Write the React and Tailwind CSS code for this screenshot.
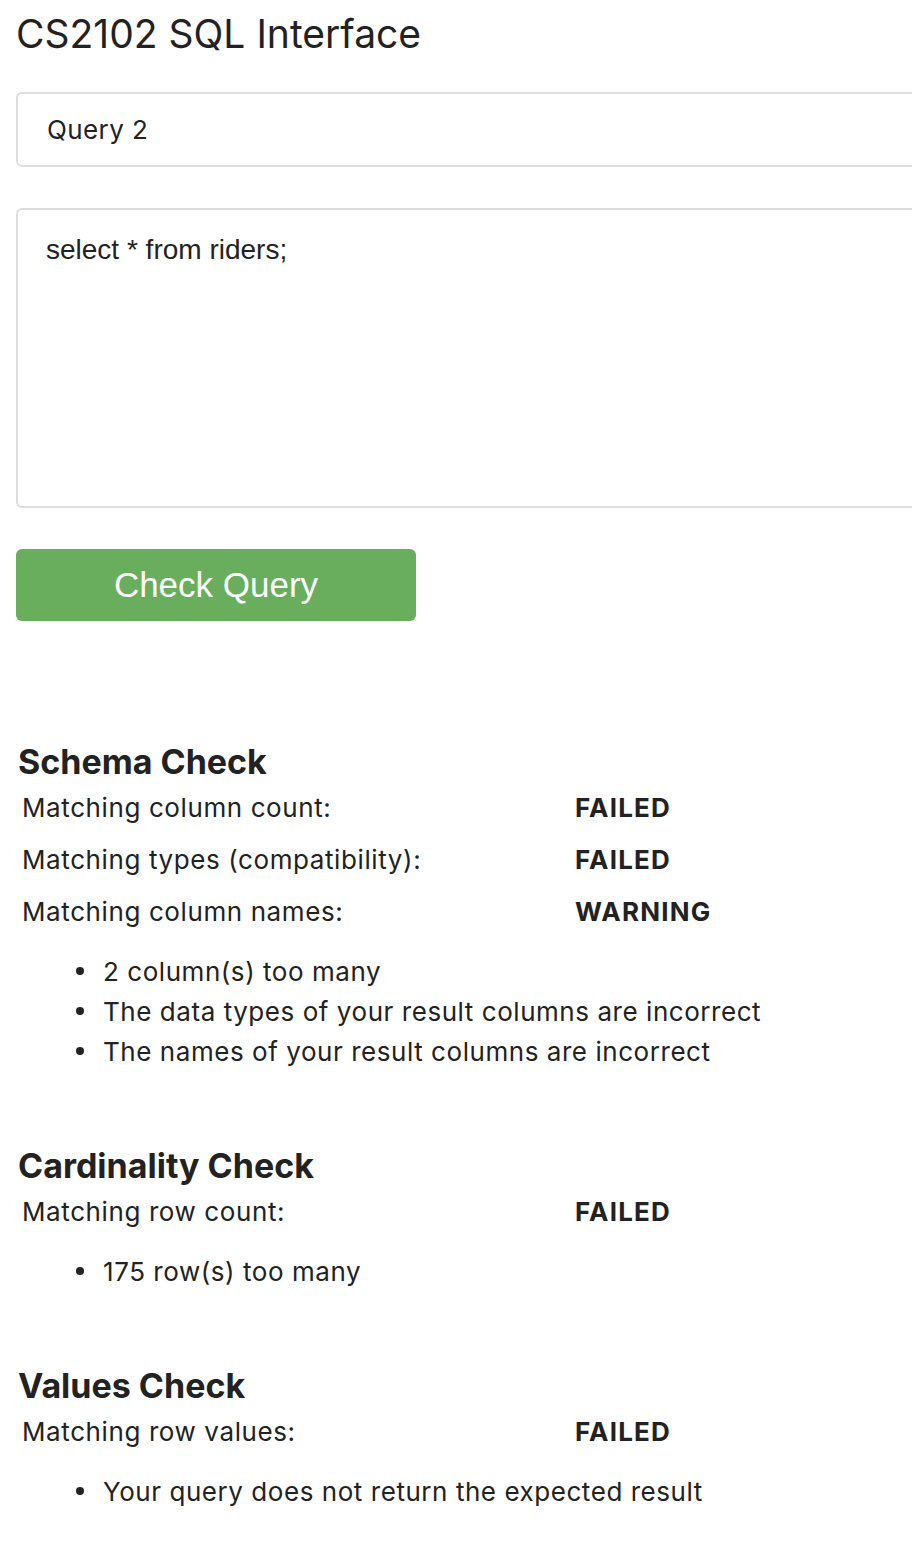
import React, { useState } from "react";

const schemaRows = [
  { label: "Matching column count:", status: "FAILED" },
  { label: "Matching types (compatibility):", status: "FAILED" },
  { label: "Matching column names:", status: "WARNING" },
];

const Row = ({ label, status }) => (
  <div className="grid grid-cols-[553px_auto] h-[52px] items-center pl-[22px] pb-[3px] text-[26px]">
    <span className="tracking-[0.6px]">{label}</span>
    <span className="font-bold tracking-[1.2px]">{status}</span>
  </div>
);

const Bullets = ({ items }) => (
  <ul className="mt-3">
    {items.map((item) => (
      <li key={item} className="flex items-center h-10 text-[26px] tracking-[0.55px]">
        <span className="ml-[76px] w-[8px] h-[8px] rounded-full bg-[#222]" />
        <span className="ml-[19px]">{item}</span>
      </li>
    ))}
  </ul>
);

const Heading = ({ children, className = "" }) => (
  <h2 className={`pl-[18px] text-[34px] font-bold leading-10 ${className}`}>
    {children}
  </h2>
);

const App = () => {
  const [name, setName] = useState("Query 2");
  const [query, setQuery] = useState("select * from riders;");

  return (
    <div className="w-[912px] min-h-[1560px] bg-white overflow-hidden text-[#222] font-['Inter',sans-serif]">
      <h1 className="pl-4 pt-2 text-[39px] leading-[52px]">CS2102 SQL Interface</h1>

      <div className="pl-4">
        <input
          value={name}
          onChange={(e) => setName(e.target.value)}
          className="block mt-8 w-[1000px] h-[75px] border-2 border-[#ddd] rounded-md px-[29px] text-[26px] tracking-[0.4px] outline-none"
        />
        <textarea
          value={query}
          onChange={(e) => setQuery(e.target.value)}
          className="block mt-[41px] w-[1000px] h-[300px] border-2 border-[#ddd] rounded-md px-[28px] pt-[19px] text-[28px] font-['Liberation_Sans',sans-serif] resize-none outline-none"
        />
        <button className="block mt-[41px] w-[400px] h-[72px] rounded-md bg-[#68ae5c] text-white text-[35px] font-['Liberation_Sans',sans-serif]">
          Check Query
        </button>
      </div>

      <Heading className="mt-[121px]">Schema Check</Heading>
      <div className="mt-px">
        {schemaRows.map((r) => (
          <Row key={r.label} {...r} />
        ))}
      </div>
      <Bullets
        items={[
          "2 column(s) too many",
          "The data types of your result columns are incorrect",
          "The names of your result columns are incorrect",
        ]}
      />

      <Heading className="mt-[75px]">Cardinality Check</Heading>
      <div className="mt-px">
        <Row label="Matching row count:" status="FAILED" />
      </div>
      <Bullets items={["175 row(s) too many"]} />

      <Heading className="mt-[75px]">Values Check</Heading>
      <div className="mt-px">
        <Row label="Matching row values:" status="FAILED" />
      </div>
      <Bullets items={["Your query does not return the expected result"]} />
    </div>
  );
};

export default App;
